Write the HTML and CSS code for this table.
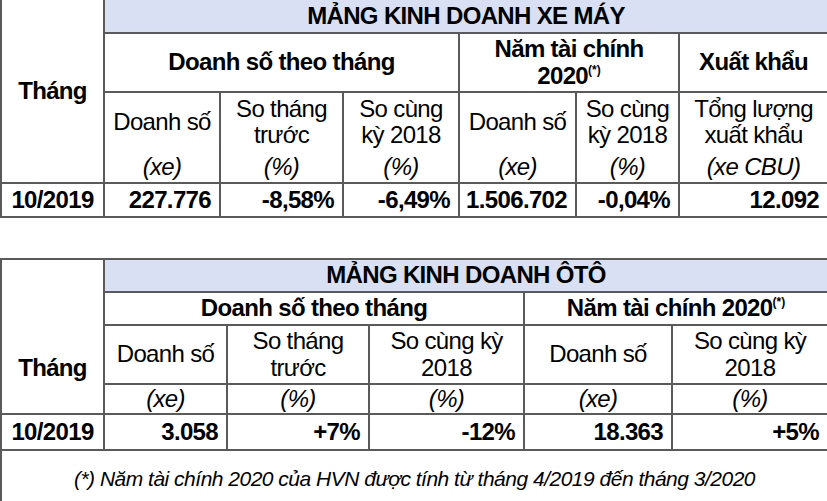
FILE: index.html
```html
<!DOCTYPE html>
<html lang="vi">
<head>
<meta charset="utf-8">
<link rel="stylesheet" href="styles.css">
</head>
<body>
<table class="tbl tbl-moto">
  <colgroup>
    <col class="w103"><col class="w116"><col class="w123"><col class="w116"><col class="w117"><col class="w103"><col class="w149">
  </colgroup>
  <tr class="r-band">
    <td class="month-h" rowspan="3">Tháng</td>
    <td class="band" colspan="6">MẢNG KINH DOANH XE MÁY</td>
  </tr>
  <tr class="r-group">
    <td class="grp" colspan="3">Doanh số theo tháng</td>
    <td class="grp" colspan="2">Năm tài chính<br>2020<sup>(*)</sup></td>
    <td class="grp">Xuất khẩu</td>
  </tr>
  <tr class="r-label">
    <td class="lbl"><div class="lbl-box"><div class="lbl-text">Doanh số</div><div class="unit">(xe)</div></div></td>
    <td class="lbl"><div class="lbl-box"><div class="lbl-text">So tháng<br>trước</div><div class="unit">(%)</div></div></td>
    <td class="lbl"><div class="lbl-box"><div class="lbl-text">So cùng<br>kỳ 2018</div><div class="unit">(%)</div></div></td>
    <td class="lbl"><div class="lbl-box"><div class="lbl-text">Doanh số</div><div class="unit">(xe)</div></div></td>
    <td class="lbl"><div class="lbl-box"><div class="lbl-text">So cùng<br>kỳ 2018</div><div class="unit">(%)</div></div></td>
    <td class="lbl"><div class="lbl-box"><div class="lbl-text">Tổng lượng<br>xuất khẩu</div><div class="unit">(xe CBU)</div></div></td>
  </tr>
  <tr class="r-data">
    <td class="month">10/2019</td>
    <td class="num">227.776</td>
    <td class="num">-8,58%</td>
    <td class="num">-6,49%</td>
    <td class="num">1.506.702</td>
    <td class="num">-0,04%</td>
    <td class="num">12.092</td>
  </tr>
</table>

<table class="tbl tbl-car">
  <colgroup>
    <col class="w103"><col class="w123"><col class="w142"><col class="w155"><col class="w148"><col class="w156">
  </colgroup>
  <tr class="r-band">
    <td class="month-h month-h2" rowspan="4">Tháng</td>
    <td class="band" colspan="5">MẢNG KINH DOANH ÔTÔ</td>
  </tr>
  <tr class="r-group2">
    <td class="grp" colspan="3">Doanh số theo tháng</td>
    <td class="grp" colspan="2">Năm tài chính 2020<sup>(*)</sup></td>
  </tr>
  <tr class="r-label2">
    <td class="lbl2">Doanh số</td>
    <td class="lbl2">So tháng<br>trước</td>
    <td class="lbl2">So cùng kỳ<br>2018</td>
    <td class="lbl2">Doanh số</td>
    <td class="lbl2">So cùng kỳ<br>2018</td>
  </tr>
  <tr class="r-unit">
    <td class="unit2">(xe)</td>
    <td class="unit2">(%)</td>
    <td class="unit2">(%)</td>
    <td class="unit2">(xe)</td>
    <td class="unit2">(%)</td>
  </tr>
  <tr class="r-data2">
    <td class="month">10/2019</td>
    <td class="num">3.058</td>
    <td class="num">+7%</td>
    <td class="num">-12%</td>
    <td class="num">18.363</td>
    <td class="num">+5%</td>
  </tr>
  <tr class="r-note">
    <td class="note" colspan="6">(*) Năm tài chính 2020 của HVN được tính từ tháng 4/2019 đến tháng 3/2020</td>
  </tr>
</table>
</body>
</html>
```

FILE: styles.css
```css
html, body {
  margin: 0;
  padding: 0;
  background: #ffffff;
}

body {
  font-family: "Liberation Sans", Arial, sans-serif;
  color: #000000;
  width: 827px;
  overflow: hidden;
}

.tbl {
  border-collapse: collapse;
  table-layout: fixed;
  width: 827px;
  font-size: 24px;
  letter-spacing: -0.65px;
  line-height: 1.1;
}

.tbl td {
  border: 2px solid #5a5a5a;
  padding: 0;
  text-align: center;
  vertical-align: middle;
  overflow: hidden;
  white-space: nowrap;
}

.tbl-moto tr:first-child td {
  border-top: none;
}

.tbl-car {
  margin-top: 40px;
}

.w103 { width: 103px; }
.w116 { width: 116px; }
.w117 { width: 117px; }
.w123 { width: 123px; }
.w142 { width: 142px; }
.w148 { width: 148px; }
.w149 { width: 149px; }
.w155 { width: 155px; }
.w156 { width: 156px; }

.r-band { height: 33px; }
.r-group { height: 59px; }
.r-label { height: 89px; }
.r-data { height: 34px; }
.r-group2 { height: 33px; }
.r-label2 { height: 59px; }
.r-unit { height: 30px; }
.r-data2 { height: 36px; }
.r-note { height: 53px; }

.tbl td.band {
  background: #d9e0f3;
  font-weight: bold;
}

.tbl td.month-h {
  font-weight: bold;
}

.tbl td.month-h2 {
  vertical-align: bottom;
  padding-bottom: 32px;
}

.tbl td.grp {
  font-weight: bold;
}

.grp sup {
  font-size: 12px;
  font-weight: bold;
  letter-spacing: 0;
  vertical-align: 10px;
  line-height: 0;
}

.lbl-box {
  display: flex;
  flex-direction: column;
  height: 89px;
}

.lbl-text {
  height: 58px;
  display: flex;
  align-items: center;
  justify-content: center;
}

.unit, .unit2 {
  font-style: italic;
}

.unit {
  height: 31px;
  line-height: 31px;
}

.tbl td.month {
  font-weight: bold;
}

.tbl td.num {
  font-weight: bold;
  text-align: right;
  padding-right: 8px;
}

.tbl td.note {
  font-size: 21px;
  letter-spacing: -0.5px;
  font-style: italic;
  padding-top: 4px;
}
```
